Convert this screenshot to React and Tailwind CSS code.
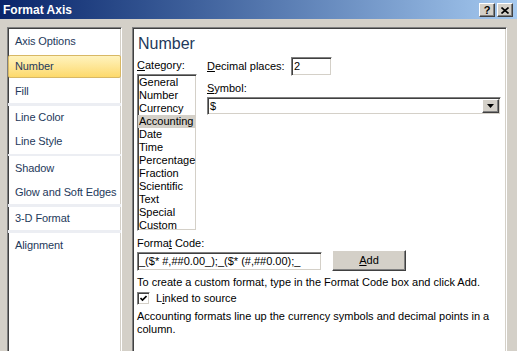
const font = { fontFamily: '"Liberation Sans", Arial, sans-serif' };

const navItems = [
  { label: 'Axis Options', h: 'h-[25px]' },
  { label: 'Number', h: 'h-[25px]', active: true },
  { label: 'Fill', h: 'h-[24px]' },
  { sep: 'h-[3px]' },
  { label: 'Line Color', h: 'h-[23px]' },
  { label: 'Line Style', h: 'h-[25px]' },
  { sep: 'h-[2px]' },
  { label: 'Shadow', h: 'h-[24px]' },
  { label: 'Glow and Soft Edges', h: 'h-[24px]' },
  { sep: 'h-[3px]' },
  { label: '3-D Format', h: 'h-[23px]' },
  { sep: 'h-[3px]' },
  { label: 'Alignment', h: 'h-[24px]' },
];

const categories = [
  'General', 'Number', 'Currency', 'Accounting', 'Date', 'Time',
  'Percentage', 'Fraction', 'Scientific', 'Text', 'Special', 'Custom',
];

const sunken =
  'border border-t-[#808080] border-l-[#808080] border-b-white border-r-white shadow-[inset_1px_1px_0_#404040,inset_-1px_-1px_0_#d4d0c8]';
const raised =
  'border border-t-white border-l-white border-b-[#404040] border-r-[#404040] shadow-[inset_-1px_-1px_0_#808080,inset_1px_1px_0_#d4d0c8] bg-[#d4d0c8]';

const TitleButton = ({ children }) => (
  <div className={`w-[16px] h-[14px] flex items-center justify-center ${raised}`}>{children}</div>
);

export default function App() {
  return (
    <div style={font} className="w-[517px] h-[351px] overflow-hidden bg-[#d4d0c8] flex flex-col text-[11px]">
      {/* Title bar */}
      <div className="h-[19px] shrink-0 flex items-center justify-between pl-[3px] pr-[4px] bg-linear-to-r from-[#0a246a] to-[#a6caf0]">
        <span className="text-white font-bold text-[12px] leading-none">Format Axis</span>
        <div className="flex gap-[2px] mt-[1px]">
          <TitleButton>
            <span className="text-black font-bold text-[11px] leading-none">?</span>
          </TitleButton>
          <TitleButton>
            <svg width="8" height="7" viewBox="0 0 8 7">
              <path d="M0.5 0.5 L7.5 6.5 M7.5 0.5 L0.5 6.5" stroke="black" strokeWidth="1.6" />
            </svg>
          </TitleButton>
        </div>
      </div>

      <div className="flex-1 min-h-0 flex pt-[8px] pl-[7px] pr-[10px] gap-[10px]">
        {/* Left nav */}
        <div className={`w-[115px] h-[340px] bg-white ${sunken} pt-[1px] text-[#1e395b] text-[11px] tracking-[-0.1px]`}>
          {navItems.map((item, i) =>
            item.sep ? (
              <div key={i} className={`${item.sep} bg-[#eceef3]`} />
            ) : (
              <div key={i} className={`${item.h} flex items-center`}>
                {item.active ? (
                  <div className="w-full h-[23px] flex items-center pl-[6px] rounded-[2px] border border-[#d8b865] bg-linear-to-b from-[#fff3bd] to-[#fdd96a]">
                    {item.label}
                  </div>
                ) : (
                  <span className="pl-[7px] whitespace-nowrap">{item.label}</span>
                )}
              </div>
            )
          )}
        </div>

        {/* Right content */}
        <div className={`flex-1 h-[340px] bg-white ${sunken} pl-[4px] pt-[7px] text-black`}>
          <div className="h-[18px] leading-[18px] text-[16px] text-[#1e395b] pl-[1px]">Number</div>

          <div className="flex mt-[2px]">
            {/* Category */}
            <div className="w-[60px] pt-[4px]">
              <div className="h-[13px] leading-[13px]">
                <u>C</u>ategory:
              </div>
              <div className={`mt-[2px] h-[157px] overflow-hidden bg-white ${sunken} py-[1px]`}>
                {categories.map((c) => (
                  <div
                    key={c}
                    className={`h-[13px] leading-[13px] pl-[1px] whitespace-nowrap ${c === 'Accounting' ? 'bg-[#d4d0c8]' : ''}`}
                  >
                    {c}
                  </div>
                ))}
              </div>
            </div>

            {/* Decimal / Symbol */}
            <div className="ml-[10px] pt-[2px]">
              <div className="flex items-center h-[19px]">
                <span className="w-[84px]">
                  <u>D</u>ecimal places:
                </span>
                <div className={`w-[41px] h-[19px] bg-white ${sunken} flex items-center pl-[2px]`}>2</div>
              </div>
              <div className="mt-[6px] h-[13px] leading-[13px]">
                <u>S</u>ymbol:
              </div>
              <div className={`mt-[2px] w-[294px] h-[18px] bg-white ${sunken} flex items-center justify-between pl-[2px] pr-[1px]`}>
                <span>$</span>
                <div className={`w-[17px] h-[14px] flex items-center justify-center ${raised}`}>
                  <svg width="7" height="4" viewBox="0 0 7 4">
                    <path d="M0 0 H7 L3.5 4 Z" fill="black" />
                  </svg>
                </div>
              </div>
            </div>
          </div>

          {/* Format code */}
          <div className="mt-[6px] h-[13px] leading-[13px]">
            Forma<u>t</u> Code:
          </div>
          <div className="flex items-end">
            <div className={`w-[185px] h-[19px] bg-white ${sunken} flex items-center pl-[1px] overflow-hidden whitespace-nowrap`}>
              <span>_($* #,##0.00_);_($* (#,##0.00);_</span>
            </div>
            <div className={`ml-[10px] w-[74px] h-[21px] flex items-center justify-center ${raised}`}>
              <span>
                <u>A</u>dd
              </span>
            </div>
          </div>

          <div className="mt-[5px] h-[13px] leading-[13px] whitespace-nowrap">
            To create a custom format, type in the Format Code box and click Add.
          </div>

          <div className="mt-[3px] flex items-center h-[13px]">
            <div className={`w-[13px] h-[13px] bg-white ${sunken} flex items-center justify-center`}>
              <svg width="7" height="7" viewBox="0 0 7 7">
                <path d="M0.5 3 L2.5 5 L6.5 1" stroke="black" strokeWidth="1.6" fill="none" />
              </svg>
            </div>
            <span className="ml-[6px]">
              L<u>i</u>nked to source
            </span>
          </div>

          <div className="mt-[5px] leading-[13px] whitespace-nowrap">
            Accounting formats line up the currency symbols and decimal points in a
            <br />
            column.
          </div>
        </div>
      </div>
    </div>
  );
}
